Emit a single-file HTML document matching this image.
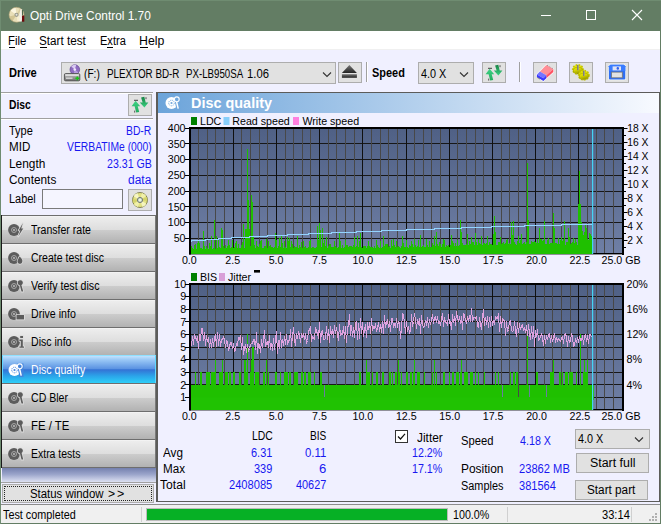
<!DOCTYPE html>
<html><head><meta charset="utf-8"><title>Opti Drive Control 1.70</title>
<style>

html,body{margin:0;padding:0;}
body{width:661px;height:524px;overflow:hidden;position:relative;background:#f0f0ff;font-family:"Liberation Sans", sans-serif;font-size:12px;}
div,span,svg{position:absolute;box-sizing:border-box;}
.t{white-space:pre;line-height:20px;height:20px;transform-origin:0 50%;z-index:5;}
.charts{left:0;top:0;z-index:3;}
.btn{background:#e1e1e1;border:1px solid #adadad;}
.nav{left:2px;width:154px;height:28px;border-top:1px solid #6e6e6e;border-right:1px solid #7a7a7a;background:linear-gradient(#f8f8f8 0,#ededed 4%,#dedede 50%,#cdcdcd 51%,#b2b2b2 100%);}
.nav.sel{background:linear-gradient(#c2e2fe 0,#9ac8f6 14%,#5b93e2 47%,#3473d5 51%,#2ba4e9 74%,#2ecff8 100%);border-left:1px solid #5fd8ff;border-right:1px solid #5fd8ff;border-top-color:#8fe0ff;}
.ic{z-index:6;}

</style></head><body>
<div style="left:0;top:0;width:661px;height:31px;background:#637d64"></div>
<div style="left:0;top:0;width:1px;height:524px;background:#637d64"></div>
<div style="left:660px;top:0;width:1px;height:524px;background:#637d64"></div>
<div style="left:0;top:523px;width:661px;height:1px;background:#637d64"></div>
<div style="left:0;top:0;width:661px;height:1px;background:#6f8c71"></div><div style="left:0;top:0;width:1px;height:524px;background:#6f8c71"></div>
<svg class="ic" style="left:8px;top:6px" width="20" height="20" viewBox="0 0 20 20">
<circle cx="8.5" cy="8.8" r="7.5" fill="#e9dfb8"/>
<path d="M8.5,8.8 L2.2,4.6 A7.5,7.5 0 0 1 7.5,1.4 Z" fill="#fbf6e0"/><path d="M8.5,8.8 L14.8,13 A7.5,7.5 0 0 1 9.5,16.2 Z" fill="#f6eed0"/>
<path d="M8.5,8.8 L1.2,10.5 A7.5,7.5 0 0 0 4.5,15.2 Z" fill="#d2c594"/><path d="M8.5,8.8 L12,2.2 A7.5,7.5 0 0 1 15.6,6.5 Z" fill="#d8cc9c"/>
<circle cx="8.5" cy="8.8" r="7.5" fill="none" stroke="#a89c70" stroke-width="0.6"/>
<circle cx="8.5" cy="8.8" r="2.1" fill="#9a9a8c"/><circle cx="8.5" cy="8.8" r="1" fill="#e4e4dc"/>
<path d="M12.6,3 L13.6,3 L13.8,15.6 L11.6,15.6 L11.4,8 Z" fill="#f2f2ee"/>
<rect x="14" y="9.5" width="2.3" height="6.2" fill="#6e0a0c"/><rect x="14" y="4" width="1" height="5.5" fill="#4f6a52"/></svg>
<div style="left:541px;top:15px;width:10px;height:1px;background:#fff"></div>
<div style="left:586px;top:10px;width:10px;height:10px;border:1px solid #fff"></div>
<svg class="ic" style="left:631px;top:9px" width="12" height="12" viewBox="0 0 12 12"><path d="M1,1 L11,11 M11,1 L1,11" stroke="#fff" stroke-width="1.1" fill="none"/></svg>
<div style="left:1px;top:31px;width:659px;height:18px;background:#fff"></div><div style="left:1px;top:49px;width:659px;height:1px;background:#f0f0f0"></div>
<div style="left:8.5px;top:47px;width:6px;height:1px;background:#000;z-index:6"></div>
<div style="left:40px;top:47px;width:6.5px;height:1px;background:#000;z-index:6"></div>
<div style="left:107px;top:47px;width:6px;height:1px;background:#000;z-index:6"></div>
<div style="left:140px;top:47px;width:8px;height:1px;background:#000;z-index:6"></div>
<div class="btn" style="left:61px;top:62px;width:275px;height:22px"></div>
<svg class="ic" style="left:322px;top:70.5px" width="10" height="8" viewBox="0 0 10 8"><path d="M1,1.5 L5,5.5 L9,1.5" stroke="#333" stroke-width="1.1" fill="none"/></svg>
<svg class="ic" style="left:63px;top:63px" width="19" height="20" viewBox="0 0 19 20">
<defs><linearGradient id="dv" x1="0" y1="0" x2="0" y2="1"><stop offset="0" stop-color="#c4c4c4"/><stop offset="1" stop-color="#707070"/></linearGradient></defs>
<circle cx="11.8" cy="6.6" r="4.8" fill="#8e6cc0" stroke="#5e4290" stroke-width="0.7"/>
<path d="M11.8,6.6 L8.2,3.6 A4.8,4.8 0 0 1 13.2,2 Z" fill="#d9caf2"/><path d="M11.8,6.6 L15.4,9.6 A4.8,4.8 0 0 1 10.6,11.2 Z" fill="#b79ce0"/>
<circle cx="11.8" cy="6.6" r="1.3" fill="#efe8fa"/>
<rect x="1.4" y="10.6" width="15.4" height="7.2" rx="1.2" fill="url(#dv)" stroke="#4a4a4a" stroke-width="0.9"/>
<rect x="2.4" y="11.4" width="13.4" height="1.4" fill="#e6e6e6"/><rect x="3" y="14.6" width="6.5" height="1.2" fill="#e0e0e0"/>
<path d="M13.6,13.4 h1.4 v1.2 h1.2 v1.4 h-1.2 v1.2 h-1.4 v-1.2 h-1.2 v-1.4 h1.2z" fill="#18c818"/></svg>
<div class="btn" style="left:338px;top:62px;width:24px;height:21px"></div>
<svg class="ic" style="left:341px;top:64px" width="17" height="15" viewBox="0 0 17 15"><defs><linearGradient id="ej" x1="0" y1="0" x2="0" y2="1"><stop offset="0" stop-color="#777"/><stop offset="1" stop-color="#222"/></linearGradient></defs><path d="M8.4,1 L15.9,9 L0.9,9 Z" fill="url(#ej)"/><rect x="0.9" y="10.2" width="15" height="3.6" fill="url(#ej)"/></svg>
<div style="left:366px;top:62px;width:1px;height:20px;background:#a0a0a0"></div><div style="left:367px;top:62px;width:1px;height:20px;background:#fff"></div>
<div class="btn" style="left:418px;top:62px;width:56px;height:22px"></div>
<svg class="ic" style="left:459px;top:70.5px" width="10" height="8" viewBox="0 0 10 8"><path d="M1,1.5 L5,5.5 L9,1.5" stroke="#333" stroke-width="1.1" fill="none"/></svg>
<div class="btn" style="left:482px;top:62px;width:24px;height:21px"></div>
<svg class="ic" style="left:482px;top:62px" width="24" height="22" viewBox="0 0 24 22">
<defs><linearGradient id="ra482" x1="0" y1="0" x2="0" y2="1"><stop offset="0" stop-color="#3ed486"/><stop offset="1" stop-color="#22aa5c"/></linearGradient>
<linearGradient id="rb482" x1="0" y1="0" x2="0" y2="1"><stop offset="0" stop-color="#158044"/><stop offset="1" stop-color="#3cd482"/></linearGradient></defs>
<path d="M7.6,6.8 L12.2,12.2 L9.7,12.2 L11.2,18 L8.2,18.6 L6.6,12.2 L3.6,12.2 Z" fill="url(#ra482)"/>
<path d="M16.4,13.6 L11.8,8.6 L14.6,8.6 L13.1,3.4 L16.3,2.8 L17.7,8.6 L20.4,8.6 Z" fill="url(#rb482)"/>
<rect x="6" y="5.8" width="4" height="1" fill="#444"/><rect x="17.5" y="3.2" width="1" height="2" fill="#555"/><rect x="6.2" y="16.6" width="1" height="2" fill="#555"/></svg>
<div style="left:519px;top:62px;width:1px;height:20px;background:#a0a0a0"></div><div style="left:520px;top:62px;width:1px;height:20px;background:#fff"></div>
<div class="btn" style="left:533px;top:62px;width:24px;height:21px"></div>
<svg class="ic" style="left:533px;top:62px" width="24" height="21" viewBox="0 0 24 21">
<path d="M13.3,3 L20.3,6.9 L20.3,9.9 L13.3,16.3 L10.4,19 L3.9,15 L3.9,12.4 Z" fill="#fff" stroke="#fff" stroke-width="1.4" stroke-linejoin="round" opacity=".85"/>
<path d="M13.3,3 L20.3,6.9 L13.3,13.3 L6.9,9.4 Z" fill="#ff8e96"/>
<path d="M20.3,6.9 L20.3,9.9 L13.3,16.3 L13.3,13.3 Z" fill="#ff5464"/>
<path d="M6.9,9.4 L13.3,13.3 L10.4,16.3 L3.9,12.4 Z" fill="#7474ff"/>
<path d="M3.9,12.4 L10.4,16.3 L13.3,13.3 L13.3,16.3 L10.4,19 L3.9,15 Z" fill="#3838ff"/>
<path d="M14,3.2 L20.4,6.8" stroke="#555" stroke-width="0.6" stroke-dasharray="1 1"/><path d="M3.8,15.2 L7,17.2" stroke="#555" stroke-width="0.6"/></svg>
<div class="btn" style="left:569px;top:62px;width:24px;height:21px"></div>
<svg class="ic" style="left:571px;top:63px" width="20" height="20" viewBox="0 0 20 20">
<defs><linearGradient id="gg" x1="0" y1="0" x2="0.3" y2="1"><stop offset="0" stop-color="#f2f200"/><stop offset="0.6" stop-color="#d8d800"/><stop offset="1" stop-color="#9a9a00"/></linearGradient></defs>
<g><ellipse cx="6.9" cy="6.4" rx="5.2" ry="4.6" fill="url(#gg)" stroke="#c4c400" stroke-width="1.6" stroke-dasharray="1.6 1.3"/><ellipse cx="6.9" cy="7.6" rx="4.6" ry="3.4" fill="none" stroke="#8a8a00" stroke-width="0.7" opacity=".6"/>
<rect x="6.1" y="2" width="1.7" height="5.2" fill="#9a9a9a"/><rect x="6.1" y="2" width="0.6" height="5.2" fill="#6e6e6e"/></g>
<g><ellipse cx="12.8" cy="12.2" rx="5.2" ry="4.6" fill="url(#gg)" stroke="#c4c400" stroke-width="1.6" stroke-dasharray="1.6 1.3"/><ellipse cx="12.8" cy="13.4" rx="4.6" ry="3.4" fill="none" stroke="#8a8a00" stroke-width="0.7" opacity=".6"/>
<rect x="12" y="7.8" width="1.7" height="5.2" fill="#9a9a9a"/><rect x="12" y="7.8" width="0.6" height="5.2" fill="#6e6e6e"/></g></svg>
<div class="btn" style="left:605px;top:62px;width:24px;height:21px"></div>
<svg class="ic" style="left:605px;top:62px" width="24" height="21" viewBox="0 0 24 21">
<path d="M5.4,2.7 H18.8 L20.3,4.2 V16.6 Q20.3,17.6 19.3,17.6 H4.9 Q3.9,17.6 3.9,16.6 V4.2 Z" fill="#2f6ff4" stroke="#fdfdf6" stroke-width="1.2" paint-order="stroke"/>
<path d="M5.4,2.7 H18.8 L20.3,4.2 V9 H3.9 V4.2 Z" fill="#3a7cff"/>
<rect x="7.6" y="4.4" width="8.4" height="4" fill="#dfe3f4"/><rect x="11.6" y="5" width="2.4" height="2.8" rx="1.2" fill="#2f5ff0"/>
<rect x="6.6" y="10.1" width="10.7" height="5.7" fill="#e2e2e2" stroke="#777" stroke-width="0.8"/></svg>
<div style="left:1px;top:92px;width:152px;height:1px;background:#a0a0a0"></div><div style="left:1px;top:93px;width:152px;height:1px;background:#fff"></div>
<div style="left:1px;top:118px;width:152px;height:1px;background:#a0a0a0"></div><div style="left:1px;top:119px;width:152px;height:1px;background:#fff"></div>
<div class="btn" style="left:128px;top:94px;width:24px;height:22px"></div>
<svg class="ic" style="left:128px;top:94px" width="24" height="22" viewBox="0 0 24 22">
<defs><linearGradient id="ra128" x1="0" y1="0" x2="0" y2="1"><stop offset="0" stop-color="#3ed486"/><stop offset="1" stop-color="#22aa5c"/></linearGradient>
<linearGradient id="rb128" x1="0" y1="0" x2="0" y2="1"><stop offset="0" stop-color="#158044"/><stop offset="1" stop-color="#3cd482"/></linearGradient></defs>
<path d="M7.6,6.8 L12.2,12.2 L9.7,12.2 L11.2,18 L8.2,18.6 L6.6,12.2 L3.6,12.2 Z" fill="url(#ra128)"/>
<path d="M16.4,13.6 L11.8,8.6 L14.6,8.6 L13.1,3.4 L16.3,2.8 L17.7,8.6 L20.4,8.6 Z" fill="url(#rb128)"/>
<rect x="6" y="5.8" width="4" height="1" fill="#444"/><rect x="17.5" y="3.2" width="1" height="2" fill="#555"/><rect x="6.2" y="16.6" width="1" height="2" fill="#555"/></svg>
<div style="left:42px;top:189px;width:81px;height:20px;background:#f5f5ff;border:1px solid #7a7a7a"></div>
<div class="btn" style="left:128px;top:189px;width:24px;height:22px"></div>
<svg class="ic" style="left:131px;top:191px" width="18" height="18" viewBox="0 0 18 18"><circle cx="9" cy="9" r="7.5" fill="#e2e282" stroke="#5a5a28" stroke-width="0.7"/>
<path d="M9,9 L2.6,5.2 A7.4,7.4 0 0 1 6.4,2 Z" fill="#f6f6c4"/><path d="M9,9 L15.4,12.8 A7.4,7.4 0 0 1 11.6,16 Z" fill="#f4f4be"/>
<path d="M9,9 L11,1.9 A7.4,7.4 0 0 1 15.2,5 Z" fill="#f0f0aa"/><path d="M9,9 L7,16.1 A7.4,7.4 0 0 1 2.8,13 Z" fill="#f0f0aa"/>
<path d="M9,9 L1.7,8 A7.4,7.4 0 0 0 2.4,12 Z" fill="#d2d26a"/><path d="M9,9 L16.3,10 A7.4,7.4 0 0 0 15.6,6 Z" fill="#d2d26a"/>
<circle cx="9" cy="9" r="2.6" fill="#cfe0c0" stroke="#6a6e74" stroke-width="0.9"/><circle cx="9" cy="9" r="1.1" fill="#f4f4f4"/></svg>
<div class="nav" style="top:215px"></div>
<svg class="ic" style="left:7px;top:222px" width="18" height="16" viewBox="0 0 18 16"><circle cx="7" cy="8" r="5.9" fill="#5c5c5c"/><circle cx="7" cy="8" r="2.5" fill="none" stroke="#b8b8b8" stroke-width="0.8"/><circle cx="7" cy="8" r="0.9" fill="#c8c8c8"/><path d="M15.8,1.2 L11.6,8.4 L13.4,8.4 L11.2,14.6 L16.2,6.6 L14.2,6.6 Z" fill="#5c5c5c" stroke="#dcdcdc" stroke-width="1.6" paint-order="stroke" stroke-linejoin="round"/></svg>
<div class="nav" style="top:243px"></div>
<svg class="ic" style="left:7px;top:250px" width="18" height="16" viewBox="0 0 18 16"><circle cx="7" cy="8" r="5.9" fill="#5c5c5c"/><circle cx="7" cy="8" r="2.5" fill="none" stroke="#b8b8b8" stroke-width="0.8"/><circle cx="7" cy="8" r="0.9" fill="#c8c8c8"/><path d="M12.5,6.5 c2.5,2 3.5,4 2.6,6 c-0.8,1.8 -3.6,1.8 -4.4,0 c-0.7,-1.6 0.4,-3 1.8,-6z" fill="#5c5c5c" stroke="#dcdcdc" stroke-width="1.6" paint-order="stroke" stroke-linejoin="round"/></svg>
<div class="nav" style="top:271px"></div>
<svg class="ic" style="left:7px;top:278px" width="18" height="16" viewBox="0 0 18 16"><circle cx="7" cy="8" r="5.9" fill="#5c5c5c"/><circle cx="7" cy="8" r="2.5" fill="none" stroke="#b8b8b8" stroke-width="0.8"/><circle cx="7" cy="8" r="0.9" fill="#c8c8c8"/><path d="M13.2,2.2 a2.6,2.6 0 1 0 0.1,0z M14.4,7 l1.8,6.6 h-1.7 l-1.6,-6.2z" fill="#5c5c5c" stroke="#dcdcdc" stroke-width="1.6" paint-order="stroke" stroke-linejoin="round"/></svg>
<div class="nav" style="top:299px"></div>
<svg class="ic" style="left:7px;top:306px" width="18" height="16" viewBox="0 0 18 16"><circle cx="7" cy="8" r="5.9" fill="#5c5c5c"/><circle cx="7" cy="8" r="2.5" fill="none" stroke="#b8b8b8" stroke-width="0.8"/><circle cx="7" cy="8" r="0.9" fill="#c8c8c8"/><path d="M9.5,9 h7.5 v4.4 h-7.5z" fill="#5c5c5c" stroke="#dcdcdc" stroke-width="1.6" paint-order="stroke" stroke-linejoin="round"/></svg>
<div class="nav" style="top:327px"></div>
<svg class="ic" style="left:7px;top:334px" width="18" height="16" viewBox="0 0 18 16"><circle cx="7" cy="8" r="5.9" fill="#5c5c5c"/><circle cx="7" cy="8" r="2.5" fill="none" stroke="#b8b8b8" stroke-width="0.8"/><circle cx="7" cy="8" r="0.9" fill="#c8c8c8"/><path d="M13.2,2 h2.8 v2 h-2.8z M12.4,5.6 h3.4 v6.8 h1.2 v1.4 h-4.6 v-1.4 h1.4 v-5.4 h-1.4z" fill="#5c5c5c" stroke="#dcdcdc" stroke-width="1.6" paint-order="stroke" stroke-linejoin="round"/></svg>
<div class="nav sel" style="top:355px"></div>
<svg class="ic" style="left:6.5px;top:362px" width="18" height="16" viewBox="0 0 18 16"><circle cx="7.5" cy="8" r="6" fill="#fff"/><circle cx="7.5" cy="8" r="2.8" fill="none" stroke="#4384dc" stroke-width="0.9" stroke-dasharray="1.2 0.7"/><circle cx="7.5" cy="8" r="1.1" fill="#4384dc"/>
<path d="M10.2,1.5 L16.5,1.5 L16.5,15 L12.6,15 L11.2,8.5 Z" fill="#4384dc"/>
<circle cx="12.8" cy="4.3" r="2.4" fill="#4384dc" stroke="#fff" stroke-width="1.1"/><path d="M12.6,6.8 L14.2,13.6" stroke="#fff" stroke-width="1.5" fill="none"/></svg>
<div class="nav" style="top:383px"></div>
<svg class="ic" style="left:7px;top:390px" width="18" height="16" viewBox="0 0 18 16"><circle cx="7" cy="8" r="5.9" fill="#5c5c5c"/><circle cx="7" cy="8" r="2.5" fill="none" stroke="#b8b8b8" stroke-width="0.8"/><circle cx="7" cy="8" r="0.9" fill="#c8c8c8"/><path d="M13.2,2.2 a2.6,2.6 0 1 0 0.1,0z M14.6,7 l1.6,6.6 h-1.7 l-1.5,-6.2z" fill="#5c5c5c" stroke="#dcdcdc" stroke-width="1.6" paint-order="stroke" stroke-linejoin="round"/></svg>
<div class="nav" style="top:411px"></div>
<svg class="ic" style="left:7px;top:418px" width="18" height="16" viewBox="0 0 18 16"><circle cx="7" cy="8" r="5.9" fill="#5c5c5c"/><circle cx="7" cy="8" r="2.5" fill="none" stroke="#b8b8b8" stroke-width="0.8"/><circle cx="7" cy="8" r="0.9" fill="#c8c8c8"/><path d="M13.2,2.2 a2.6,2.6 0 1 0 0.1,0z M14.6,7 l1.6,6.6 h-1.7 l-1.5,-6.2z" fill="#5c5c5c" stroke="#dcdcdc" stroke-width="1.6" paint-order="stroke" stroke-linejoin="round"/></svg>
<div class="nav" style="top:439px"></div>
<svg class="ic" style="left:7px;top:446px" width="18" height="16" viewBox="0 0 18 16"><circle cx="7" cy="8" r="5.9" fill="#5c5c5c"/><circle cx="7" cy="8" r="2.5" fill="none" stroke="#b8b8b8" stroke-width="0.8"/><circle cx="7" cy="8" r="0.9" fill="#c8c8c8"/><path d="M13.2,2.2 a2.6,2.6 0 1 0 0.1,0z M14.6,7 l1.6,6.6 h-1.7 l-1.5,-6.2z" fill="#5c5c5c" stroke="#dcdcdc" stroke-width="1.6" paint-order="stroke" stroke-linejoin="round"/></svg>
<div style="left:1px;top:215px;width:1px;height:253px;background:#1a1a1a"></div>
<div style="left:2px;top:467px;width:154px;height:1px;background:#6e6e6e"></div>
<div style="left:2px;top:468px;width:154px;height:14px;background:linear-gradient(#7480ae,#9aa4ca 45%,#dde1f2 100%)"></div>
<div style="left:1px;top:482px;width:155px;height:1px;background:#a0a0a0"></div>
<div class="btn" style="left:2px;top:484px;width:152px;height:19px"></div>
<div style="left:4px;top:486px;width:148px;height:15px;border:1px dotted #222"></div>
<div style="left:1px;top:505px;width:659px;height:18px;background:#f0f0f0"></div>
<div style="left:1px;top:504px;width:659px;height:1px;background:#8c8c8c"></div>
<div style="left:141px;top:507px;width:1px;height:15px;background:#d0d0d0"></div>
<div style="left:507px;top:507px;width:1px;height:15px;background:#d0d0d0"></div>
<div style="left:631px;top:507px;width:1px;height:15px;background:#d0d0d0"></div>
<div style="left:146px;top:508px;width:302px;height:13px;background:#e6e6e6;border:1px solid #bcbcbc"></div>
<div style="left:147px;top:509px;width:300px;height:11px;background:#06b025"></div>
<div style="left:655px;top:513px;width:2px;height:2px;background:#b0b0b0"></div>
<div style="left:652px;top:516px;width:2px;height:2px;background:#b0b0b0"></div>
<div style="left:655px;top:516px;width:2px;height:2px;background:#b0b0b0"></div>
<div style="left:649px;top:519px;width:2px;height:2px;background:#b0b0b0"></div>
<div style="left:652px;top:519px;width:2px;height:2px;background:#b0b0b0"></div>
<div style="left:655px;top:519px;width:2px;height:2px;background:#b0b0b0"></div>
<div style="left:156px;top:92px;width:504px;height:410px;border:1px solid #5c5c5a;border-left-width:2px;background:#f0f0ff"></div>
<div style="left:158px;top:93px;width:501px;height:20px;background:linear-gradient(90deg,#6ca4da 0,#f8faff 100%)"></div>
<svg class="ic" style="left:164px;top:95px" width="18" height="16" viewBox="0 0 18 16"><circle cx="7.5" cy="8" r="6" fill="#fff"/><circle cx="7.5" cy="8" r="2.8" fill="none" stroke="#70a7dc" stroke-width="0.9" stroke-dasharray="1.2 0.7"/><circle cx="7.5" cy="8" r="1.1" fill="#70a7dc"/>
<path d="M10.2,1.5 L16.5,1.5 L16.5,15 L12.6,15 L11.2,8.5 Z" fill="#70a7dc"/>
<circle cx="12.8" cy="4.3" r="2.4" fill="#70a7dc" stroke="#fff" stroke-width="1.1"/><path d="M12.6,6.8 L14.2,13.6" stroke="#fff" stroke-width="1.5" fill="none"/></svg>
<div style="left:395px;top:430px;width:13px;height:13px;background:#fff;border:1px solid #333"></div>
<svg class="ic" style="left:396px;top:431px" width="11" height="11" viewBox="0 0 11 11"><path d="M2,5.5 L4.5,8 L9,2.8" stroke="#111" stroke-width="1.2" fill="none"/></svg>
<div class="btn" style="left:575px;top:429px;width:75px;height:20px"></div>
<svg class="ic" style="left:634px;top:435.5px" width="10" height="8" viewBox="0 0 10 8"><path d="M1,1.5 L5,5.5 L9,1.5" stroke="#333" stroke-width="1.1" fill="none"/></svg>
<div class="btn" style="left:576px;top:453px;width:73px;height:20px"></div>
<div class="btn" style="left:575px;top:480px;width:73px;height:20px"></div>
<span class=t style="left:29.65px;top:5.5px;font-size:12px;font-weight:normal;color:#fff;transform:scaleX(0.990);">Opti Drive Control 1.70</span>
<span class=t style="left:7.85px;top:31.0px;font-size:12px;font-weight:normal;color:#000;transform:scaleX(0.946);">File</span>
<span class=t style="left:39.35px;top:31.0px;font-size:12px;font-weight:normal;color:#000;transform:scaleX(0.974);">Start test</span>
<span class=t style="left:99.85px;top:31.0px;font-size:12px;font-weight:normal;color:#000;transform:scaleX(0.921);">Extra</span>
<span class=t style="left:139.35px;top:31.0px;font-size:12px;font-weight:normal;color:#000;transform:scaleX(1.025);">Help</span>
<span class=t style="left:8.85px;top:63.0px;font-size:12px;font-weight:bold;color:#000;transform:scaleX(0.926);">Drive</span>
<span class=t style="left:83.85px;top:63.5px;font-size:12px;font-weight:normal;color:#000;transform:scaleX(0.847);">(F:)</span>
<span class=t style="left:107.35px;top:63.5px;font-size:12px;font-weight:normal;color:#000;transform:scaleX(0.819);">PLEXTOR BD-R</span>
<span class=t style="left:185.75px;top:63.5px;font-size:12px;font-weight:normal;color:#000;transform:scaleX(0.809);">PX-LB950SA</span>
<span class=t style="left:246.55px;top:63.5px;font-size:12px;font-weight:normal;color:#000;transform:scaleX(0.938);">1.06</span>
<span class=t style="left:372.35px;top:63.0px;font-size:12px;font-weight:bold;color:#000;transform:scaleX(0.911);">Speed</span>
<span class=t style="left:421.35px;top:63.5px;font-size:12px;font-weight:normal;color:#000;transform:scaleX(0.903);">4.0 X</span>
<span class=t style="left:8.85px;top:94.5px;font-size:12px;font-weight:bold;color:#000;transform:scaleX(0.860);">Disc</span>
<span class=t style="left:8.85px;top:121.0px;font-size:12px;font-weight:normal;color:#000;transform:scaleX(0.915);">Type</span>
<span class=t style="left:8.85px;top:137.0px;font-size:12px;font-weight:normal;color:#000;transform:scaleX(0.968);">MID</span>
<span class=t style="left:8.85px;top:154.0px;font-size:12px;font-weight:normal;color:#000;transform:scaleX(0.989);">Length</span>
<span class=t style="left:8.85px;top:170.0px;font-size:12px;font-weight:normal;color:#000;transform:scaleX(0.985);">Contents</span>
<span class=t style="left:8.85px;top:189.0px;font-size:12px;font-weight:normal;color:#000;transform:scaleX(0.912);">Label</span>
<span class=t style="left:126.35px;top:121.0px;font-size:12px;font-weight:normal;color:#1818f0;transform:scaleX(0.862);">BD-R</span>
<span class=t style="left:67.35px;top:137.0px;font-size:12px;font-weight:normal;color:#1818f0;transform:scaleX(0.861);">VERBATIMe (000)</span>
<span class=t style="left:106.85px;top:154.0px;font-size:12px;font-weight:normal;color:#1818f0;transform:scaleX(0.884);">23.31 GB</span>
<span class=t style="left:128.35px;top:170.0px;font-size:12px;font-weight:normal;color:#1818f0;transform:scaleX(0.997);">data</span>
<span class=t style="left:30.65px;top:219.5px;font-size:12px;font-weight:normal;color:#000;transform:scaleX(0.879);">Transfer rate</span>
<span class=t style="left:30.65px;top:247.5px;font-size:12px;font-weight:normal;color:#000;transform:scaleX(0.876);">Create test disc</span>
<span class=t style="left:30.65px;top:275.5px;font-size:12px;font-weight:normal;color:#000;transform:scaleX(0.885);">Verify test disc</span>
<span class=t style="left:30.65px;top:303.5px;font-size:12px;font-weight:normal;color:#000;transform:scaleX(0.884);">Drive info</span>
<span class=t style="left:30.65px;top:331.5px;font-size:12px;font-weight:normal;color:#000;transform:scaleX(0.880);">Disc info</span>
<span class=t style="left:30.65px;top:359.5px;font-size:12px;font-weight:normal;color:#fff;transform:scaleX(0.883);">Disc quality</span>
<span class=t style="left:30.65px;top:387.5px;font-size:12px;font-weight:normal;color:#000;transform:scaleX(0.881);">CD Bler</span>
<span class=t style="left:30.65px;top:415.5px;font-size:12px;font-weight:normal;color:#000;transform:scaleX(0.949);">FE / TE</span>
<span class=t style="left:30.65px;top:443.5px;font-size:12px;font-weight:normal;color:#000;transform:scaleX(0.873);">Extra tests</span>
<span class=t style="left:29.65px;top:483.5px;font-size:12px;font-weight:normal;color:#000;transform:scaleX(0.950);">Status window</span>
<span class=t style="left:107.85px;top:483.5px;font-size:12px;font-weight:normal;color:#000;transform:scaleX(1.012);">&gt;</span>
<span class=t style="left:117.35px;top:483.5px;font-size:12px;font-weight:normal;color:#000;transform:scaleX(1.041);">&gt;</span>
<span class=t style="left:2.85px;top:505.0px;font-size:12px;font-weight:normal;color:#000;transform:scaleX(0.902);">Test completed</span>
<span class=t style="left:453.35px;top:505.0px;font-size:12px;font-weight:normal;color:#000;transform:scaleX(0.892);">100.0%</span>
<span class=t style="left:601.85px;top:505.0px;font-size:12px;font-weight:normal;color:#000;transform:scaleX(0.926);">33:14</span>
<span class=t style="left:190.95px;top:93.0px;font-size:15px;font-weight:bold;color:#fff;transform:scaleX(0.962);">Disc quality</span>
<span class=t style="left:251.85px;top:426.0px;font-size:12px;font-weight:normal;color:#000;transform:scaleX(0.866);">LDC</span>
<span class=t style="left:310.35px;top:426.0px;font-size:12px;font-weight:normal;color:#000;transform:scaleX(0.843);">BIS</span>
<span class=t style="left:162.65px;top:443.3px;font-size:12px;font-weight:normal;color:#000;transform:scaleX(0.977);">Avg</span>
<span class=t style="left:162.65px;top:459.0px;font-size:12px;font-weight:normal;color:#000;transform:scaleX(0.970);">Max</span>
<span class=t style="left:160.05px;top:475.0px;font-size:12px;font-weight:normal;color:#000;transform:scaleX(1.009);">Total</span>
<span class=t style="left:251.35px;top:443.3px;font-size:12px;font-weight:normal;color:#1818f0;transform:scaleX(0.912);">6.31</span>
<span class=t style="left:305.35px;top:443.3px;font-size:12px;font-weight:normal;color:#1818f0;transform:scaleX(0.948);">0.11</span>
<span class=t style="left:254.35px;top:459.0px;font-size:12px;font-weight:normal;color:#1818f0;transform:scaleX(0.914);">339</span>
<span class=t style="left:319.35px;top:459.0px;font-size:12px;font-weight:normal;color:#1818f0;transform:scaleX(1.092);">6</span>
<span class=t style="left:229.35px;top:475.0px;font-size:12px;font-weight:normal;color:#1818f0;transform:scaleX(0.927);">2408085</span>
<span class=t style="left:296.35px;top:475.0px;font-size:12px;font-weight:normal;color:#1818f0;transform:scaleX(0.908);">40627</span>
<span class=t style="left:416.85px;top:427.5px;font-size:12px;font-weight:normal;color:#000;transform:scaleX(0.992);">Jitter</span>
<span class=t style="left:412.35px;top:442.5px;font-size:12px;font-weight:normal;color:#1818f0;transform:scaleX(0.890);">12.2%</span>
<span class=t style="left:412.35px;top:459.0px;font-size:12px;font-weight:normal;color:#1818f0;transform:scaleX(0.890);">17.1%</span>
<span class=t style="left:460.75px;top:431.0px;font-size:12px;font-weight:normal;color:#000;transform:scaleX(0.934);">Speed</span>
<span class=t style="left:460.75px;top:459.0px;font-size:12px;font-weight:normal;color:#000;transform:scaleX(0.993);">Position</span>
<span class=t style="left:460.75px;top:475.5px;font-size:12px;font-weight:normal;color:#000;transform:scaleX(0.908);">Samples</span>
<span class=t style="left:520.15px;top:431.0px;font-size:12px;font-weight:normal;color:#1818f0;transform:scaleX(0.893);">4.18 X</span>
<span class=t style="left:519.35px;top:459.0px;font-size:12px;font-weight:normal;color:#1818f0;transform:scaleX(0.929);">23862 MB</span>
<span class=t style="left:519.35px;top:475.5px;font-size:12px;font-weight:normal;color:#1818f0;transform:scaleX(0.919);">381564</span>
<span class=t style="left:577.85px;top:429.0px;font-size:12px;font-weight:normal;color:#000;transform:scaleX(0.903);">4.0 X</span>
<span class=t style="left:589.75px;top:452.5px;font-size:12px;font-weight:normal;color:#000;transform:scaleX(1.031);">Start full</span>
<span class=t style="left:586.85px;top:479.5px;font-size:12px;font-weight:normal;color:#000;transform:scaleX(0.979);">Start part</span>
<svg class="charts" width="661" height="524" viewBox="0 0 661 524" font-family="Liberation Sans, sans-serif" font-size="10.67px">
<defs><linearGradient id="bg1" x1="0" y1="0" x2="0" y2="1"><stop offset="0" stop-color="#4f6085"/><stop offset="1" stop-color="#6f7fa5"/></linearGradient><linearGradient id="bg2" x1="0" y1="0" x2="0" y2="1"><stop offset="0" stop-color="#4f6085"/><stop offset="1" stop-color="#6f7fa5"/></linearGradient></defs>
<rect x="189" y="127" width="435" height="127" fill="url(#bg1)"/>
<line x1="190" y1="238.5" x2="623" y2="238.5" stroke="#181818" stroke-width="1"/>
<line x1="190" y1="222.5" x2="623" y2="222.5" stroke="#181818" stroke-width="1"/>
<line x1="190" y1="206.5" x2="623" y2="206.5" stroke="#181818" stroke-width="1"/>
<line x1="190" y1="191.5" x2="623" y2="191.5" stroke="#181818" stroke-width="1"/>
<line x1="190" y1="175.5" x2="623" y2="175.5" stroke="#181818" stroke-width="1"/>
<line x1="190" y1="159.5" x2="623" y2="159.5" stroke="#181818" stroke-width="1"/>
<line x1="190" y1="143.5" x2="623" y2="143.5" stroke="#181818" stroke-width="1"/>
<line x1="198.5" y1="128" x2="198.5" y2="254" stroke="#484848" stroke-width="1"/>
<line x1="207.5" y1="128" x2="207.5" y2="254" stroke="#484848" stroke-width="1"/>
<line x1="215.5" y1="128" x2="215.5" y2="254" stroke="#484848" stroke-width="1"/>
<line x1="224.5" y1="128" x2="224.5" y2="254" stroke="#484848" stroke-width="1"/>
<line x1="233.5" y1="128" x2="233.5" y2="254" stroke="#101010" stroke-width="1"/>
<line x1="241.5" y1="128" x2="241.5" y2="254" stroke="#484848" stroke-width="1"/>
<line x1="250.5" y1="128" x2="250.5" y2="254" stroke="#484848" stroke-width="1"/>
<line x1="259.5" y1="128" x2="259.5" y2="254" stroke="#484848" stroke-width="1"/>
<line x1="267.5" y1="128" x2="267.5" y2="254" stroke="#484848" stroke-width="1"/>
<line x1="276.5" y1="128" x2="276.5" y2="254" stroke="#101010" stroke-width="1"/>
<line x1="285.5" y1="128" x2="285.5" y2="254" stroke="#484848" stroke-width="1"/>
<line x1="293.5" y1="128" x2="293.5" y2="254" stroke="#484848" stroke-width="1"/>
<line x1="302.5" y1="128" x2="302.5" y2="254" stroke="#484848" stroke-width="1"/>
<line x1="310.5" y1="128" x2="310.5" y2="254" stroke="#484848" stroke-width="1"/>
<line x1="319.5" y1="128" x2="319.5" y2="254" stroke="#101010" stroke-width="1"/>
<line x1="328.5" y1="128" x2="328.5" y2="254" stroke="#484848" stroke-width="1"/>
<line x1="336.5" y1="128" x2="336.5" y2="254" stroke="#484848" stroke-width="1"/>
<line x1="345.5" y1="128" x2="345.5" y2="254" stroke="#484848" stroke-width="1"/>
<line x1="354.5" y1="128" x2="354.5" y2="254" stroke="#484848" stroke-width="1"/>
<line x1="362.5" y1="128" x2="362.5" y2="254" stroke="#101010" stroke-width="1"/>
<line x1="371.5" y1="128" x2="371.5" y2="254" stroke="#484848" stroke-width="1"/>
<line x1="380.5" y1="128" x2="380.5" y2="254" stroke="#484848" stroke-width="1"/>
<line x1="388.5" y1="128" x2="388.5" y2="254" stroke="#484848" stroke-width="1"/>
<line x1="397.5" y1="128" x2="397.5" y2="254" stroke="#484848" stroke-width="1"/>
<line x1="406.5" y1="128" x2="406.5" y2="254" stroke="#101010" stroke-width="1"/>
<line x1="414.5" y1="128" x2="414.5" y2="254" stroke="#484848" stroke-width="1"/>
<line x1="423.5" y1="128" x2="423.5" y2="254" stroke="#484848" stroke-width="1"/>
<line x1="431.5" y1="128" x2="431.5" y2="254" stroke="#484848" stroke-width="1"/>
<line x1="440.5" y1="128" x2="440.5" y2="254" stroke="#484848" stroke-width="1"/>
<line x1="449.5" y1="128" x2="449.5" y2="254" stroke="#101010" stroke-width="1"/>
<line x1="457.5" y1="128" x2="457.5" y2="254" stroke="#484848" stroke-width="1"/>
<line x1="466.5" y1="128" x2="466.5" y2="254" stroke="#484848" stroke-width="1"/>
<line x1="475.5" y1="128" x2="475.5" y2="254" stroke="#484848" stroke-width="1"/>
<line x1="483.5" y1="128" x2="483.5" y2="254" stroke="#484848" stroke-width="1"/>
<line x1="492.5" y1="128" x2="492.5" y2="254" stroke="#101010" stroke-width="1"/>
<line x1="501.5" y1="128" x2="501.5" y2="254" stroke="#484848" stroke-width="1"/>
<line x1="509.5" y1="128" x2="509.5" y2="254" stroke="#484848" stroke-width="1"/>
<line x1="518.5" y1="128" x2="518.5" y2="254" stroke="#484848" stroke-width="1"/>
<line x1="526.5" y1="128" x2="526.5" y2="254" stroke="#484848" stroke-width="1"/>
<line x1="535.5" y1="128" x2="535.5" y2="254" stroke="#101010" stroke-width="1"/>
<line x1="544.5" y1="128" x2="544.5" y2="254" stroke="#484848" stroke-width="1"/>
<line x1="552.5" y1="128" x2="552.5" y2="254" stroke="#484848" stroke-width="1"/>
<line x1="561.5" y1="128" x2="561.5" y2="254" stroke="#484848" stroke-width="1"/>
<line x1="570.5" y1="128" x2="570.5" y2="254" stroke="#484848" stroke-width="1"/>
<line x1="578.5" y1="128" x2="578.5" y2="254" stroke="#101010" stroke-width="1"/>
<line x1="587.5" y1="128" x2="587.5" y2="254" stroke="#484848" stroke-width="1"/>
<line x1="596.5" y1="128" x2="596.5" y2="254" stroke="#484848" stroke-width="1"/>
<line x1="604.5" y1="128" x2="604.5" y2="254" stroke="#484848" stroke-width="1"/>
<line x1="613.5" y1="128" x2="613.5" y2="254" stroke="#484848" stroke-width="1"/>
<rect x="189" y="253" width="435" height="1.4" fill="#000"/>
<path d="M191,254.0L191,246L192,246L192,248L193,248L193,249L194,249L194,245L195,245L195,244L196,244L196,249L197,249L197,243L198,243L198,240L199,240L199,243L200,243L200,248L201,248L201,248L202,248L202,249L203,249L203,231L204,231L204,246L205,246L205,249L206,249L206,246L207,246L207,248L208,248L208,249L209,249L209,243L210,243L210,246L211,246L211,236L212,236L212,249L213,249L213,248L214,248L214,220L215,220L215,249L216,249L216,236L217,236L217,248L218,248L218,238L219,238L219,247L220,247L220,248L221,248L221,228L222,228L222,230L223,230L223,246L224,246L224,248L225,248L225,245L226,245L226,248L227,248L227,246L228,246L228,240L229,240L229,245L230,245L230,248L231,248L231,247L232,247L232,240L233,240L233,248L234,248L234,247L235,247L235,243L236,243L236,241L237,241L237,248L238,248L238,244L239,244L239,248L240,248L240,248L241,248L241,245L242,245L242,242L243,242L243,224L244,224L244,248L245,248L245,229L246,229L246,229L247,229L247,149L248,149L248,200L249,200L249,229L250,229L250,246L251,246L251,195L252,195L252,202L253,202L253,236L254,236L254,245L255,245L255,248L256,248L256,241L257,241L257,246L258,246L258,247L259,247L259,244L260,244L260,241L261,241L261,240L262,240L262,248L263,248L263,248L264,248L264,246L265,246L265,246L266,246L266,239L267,239L267,248L268,248L268,241L269,241L269,246L270,246L270,245L271,245L271,247L272,247L272,247L273,247L273,248L274,248L274,247L275,247L275,233L276,233L276,240L277,240L277,248L278,248L278,246L279,246L279,238L280,238L280,247L281,247L281,236L282,236L282,243L283,243L283,248L284,248L284,241L285,241L285,247L286,247L286,248L287,248L287,237L288,237L288,241L289,241L289,238L290,238L290,247L291,247L291,241L292,241L292,244L293,244L293,248L294,248L294,246L295,246L295,247L296,247L296,247L297,247L297,236L298,236L298,248L299,248L299,245L300,245L300,247L301,247L301,242L302,242L302,248L303,248L303,241L304,241L304,247L305,247L305,246L306,246L306,248L307,248L307,248L308,248L308,247L309,247L309,241L310,241L310,240L311,240L311,248L312,248L312,247L313,247L313,247L314,247L314,248L315,248L315,248L316,248L316,247L317,247L317,226L318,226L318,240L319,240L319,223L320,223L320,230L321,230L321,247L322,247L322,228L323,228L323,243L324,243L324,240L325,240L325,246L326,246L326,237L327,237L327,248L328,248L328,246L329,246L329,244L330,244L330,244L331,244L331,247L332,247L332,247L333,247L333,247L334,247L334,241L335,241L335,246L336,246L336,247L337,247L337,248L338,248L338,247L339,247L339,233L340,233L340,241L341,241L341,248L342,248L342,245L343,245L343,248L344,248L344,247L345,247L345,240L346,240L346,245L347,245L347,245L348,245L348,247L349,247L349,246L350,246L350,246L351,246L351,246L352,246L352,247L353,247L353,245L354,245L354,237L355,237L355,247L356,247L356,246L357,246L357,236L358,236L358,247L359,247L359,241L360,241L360,233L361,233L361,247L362,247L362,248L363,248L363,246L364,246L364,246L365,246L365,246L366,246L366,248L367,248L367,246L368,246L368,241L369,241L369,246L370,246L370,247L371,247L371,247L372,247L372,247L373,247L373,248L374,248L374,246L375,246L375,248L376,248L376,240L377,240L377,245L378,245L378,247L379,247L379,248L380,248L380,241L381,241L381,248L382,248L382,247L383,247L383,236L384,236L384,246L385,246L385,244L386,244L386,244L387,244L387,244L388,244L388,247L389,247L389,246L390,246L390,248L391,248L391,240L392,240L392,246L393,246L393,239L394,239L394,245L395,245L395,247L396,247L396,241L397,241L397,247L398,247L398,246L399,246L399,247L400,247L400,248L401,248L401,246L402,246L402,236L403,236L403,243L404,243L404,247L405,247L405,247L406,247L406,240L407,240L407,247L408,247L408,248L409,248L409,245L410,245L410,246L411,246L411,241L412,241L412,244L413,244L413,247L414,247L414,239L415,239L415,245L416,245L416,247L417,247L417,246L418,246L418,240L419,240L419,247L420,247L420,235L421,235L421,247L422,247L422,246L423,246L423,245L424,245L424,247L425,247L425,247L426,247L426,239L427,239L427,245L428,245L428,247L429,247L429,241L430,241L430,247L431,247L431,247L432,247L432,243L433,243L433,245L434,245L434,236L435,236L435,246L436,246L436,232L437,232L437,244L438,244L438,246L439,246L439,242L440,242L440,244L441,244L441,247L442,247L442,244L443,244L443,239L444,239L444,240L445,240L445,247L446,247L446,245L447,245L447,246L448,246L448,245L449,245L449,247L450,247L450,245L451,245L451,235L452,235L452,241L453,241L453,243L454,243L454,246L455,246L455,243L456,243L456,246L457,246L457,240L458,240L458,246L459,246L459,245L460,245L460,220L461,220L461,232L462,232L462,243L463,243L463,245L464,245L464,245L465,245L465,245L466,245L466,244L467,244L467,234L468,234L468,245L469,245L469,241L470,241L470,244L471,244L471,237L472,237L472,242L473,242L473,242L474,242L474,245L475,245L475,233L476,233L476,242L477,242L477,245L478,245L478,239L479,239L479,243L480,243L480,244L481,244L481,236L482,236L482,245L483,245L483,243L484,243L484,243L485,243L485,244L486,244L486,243L487,243L487,236L488,236L488,245L489,245L489,242L490,242L490,244L491,244L491,244L492,244L492,245L493,245L493,234L494,234L494,216L495,216L495,232L496,232L496,245L497,245L497,245L498,245L498,242L499,242L499,242L500,242L500,237L501,237L501,244L502,244L502,243L503,243L503,242L504,242L504,244L505,244L505,243L506,243L506,240L507,240L507,239L508,239L508,244L509,244L509,243L510,243L510,244L511,244L511,222L512,222L512,235L513,235L513,221L514,221L514,242L515,242L515,244L516,244L516,245L517,245L517,241L518,241L518,236L519,236L519,243L520,243L520,240L521,240L521,234L522,234L522,244L523,244L523,243L524,243L524,242L525,242L525,244L526,244L526,242L527,242L527,163L528,163L528,220L529,220L529,244L530,244L530,244L531,244L531,241L532,241L532,242L533,242L533,242L534,242L534,241L535,241L535,242L536,242L536,243L537,243L537,239L538,239L538,243L539,243L539,228L540,228L540,239L541,239L541,239L542,239L542,241L543,241L543,240L544,240L544,221L545,221L545,244L546,244L546,244L547,244L547,240L548,240L548,238L549,238L549,244L550,244L550,243L551,243L551,243L552,243L552,243L553,243L553,213L554,213L554,228L555,228L555,243L556,243L556,243L557,243L557,244L558,244L558,238L559,238L559,244L560,244L560,240L561,240L561,237L562,237L562,241L563,241L563,239L564,239L564,221L565,221L565,245L566,245L566,242L567,242L567,242L568,242L568,228L569,228L569,237L570,237L570,244L571,244L571,243L572,243L572,242L573,242L573,238L574,238L574,243L575,243L575,239L576,239L576,242L577,242L577,245L578,245L578,204L579,204L579,171L580,171L580,204L581,204L581,222L582,222L582,231L583,231L583,235L584,235L584,232L585,232L585,224L586,224L586,228L587,228L587,239L588,239L588,240L589,240L589,233L590,233L590,234L591,234L591,236L592,236L592,228L593,228L593,254.0Z" fill="#1fc000" shape-rendering="crispEdges"/>
<polyline points="190.0,241.5 191.0,241.5 191.0,240.5 192.0,240.5 193.0,240.5 194.0,240.5 195.0,240.5 196.0,240.5 197.0,240.5 198.0,240.5 199.0,240.5 200.0,240.5 201.0,240.5 202.0,240.5 203.0,240.5 204.0,240.5 205.0,240.5 205.0,239.5 206.0,239.5 207.0,239.5 208.0,239.5 209.0,239.5 210.0,239.5 211.0,239.5 212.0,239.5 213.0,239.5 214.0,239.5 215.0,239.5 216.0,239.5 217.0,239.5 218.0,239.5 218.0,238.5 219.0,238.5 220.0,238.5 221.0,238.5 222.0,238.5 223.0,238.5 224.0,238.5 225.0,238.5 226.0,238.5 227.0,238.5 228.0,238.5 229.0,238.5 230.0,238.5 231.0,238.5 231.0,237.5 232.0,237.5 233.0,237.5 234.0,237.5 235.0,237.5 236.0,237.5 237.0,237.5 238.0,237.5 239.0,237.5 240.0,237.5 241.0,237.5 242.0,237.5 243.0,237.5 244.0,237.5 245.0,237.5 246.0,237.5 247.0,237.5 248.0,237.5 249.0,237.5 249.0,236.5 250.0,236.5 251.0,236.5 252.0,236.5 253.0,236.5 254.0,236.5 255.0,236.5 256.0,236.5 257.0,236.5 258.0,236.5 259.0,236.5 260.0,236.5 261.0,236.5 262.0,236.5 263.0,236.5 264.0,236.5 265.0,236.5 266.0,236.5 267.0,236.5 267.0,235.5 268.0,235.5 269.0,235.5 270.0,235.5 271.0,235.5 272.0,235.5 273.0,235.5 274.0,235.5 275.0,235.5 276.0,235.5 277.0,235.5 278.0,235.5 279.0,235.5 280.0,235.5 281.0,235.5 282.0,235.5 283.0,235.5 284.0,235.5 285.0,235.5 286.0,235.5 287.0,235.5 287.0,234.5 288.0,234.5 289.0,234.5 290.0,234.5 291.0,234.5 292.0,234.5 293.0,234.5 294.0,234.5 295.0,234.5 296.0,234.5 297.0,234.5 298.0,234.5 299.0,234.5 300.0,234.5 301.0,234.5 302.0,234.5 303.0,234.5 304.0,234.5 305.0,234.5 306.0,234.5 307.0,234.5 308.0,234.5 308.0,233.5 309.0,233.5 310.0,233.5 311.0,233.5 312.0,233.5 313.0,233.5 314.0,233.5 315.0,233.5 316.0,233.5 317.0,233.5 318.0,233.5 319.0,233.5 320.0,233.5 321.0,233.5 322.0,233.5 323.0,233.5 324.0,233.5 325.0,233.5 326.0,233.5 327.0,233.5 328.0,233.5 329.0,233.5 330.0,233.5 331.0,233.5 331.0,232.5 332.0,232.5 333.0,232.5 334.0,232.5 335.0,232.5 336.0,232.5 337.0,232.5 338.0,232.5 339.0,232.5 340.0,232.5 341.0,232.5 342.0,232.5 343.0,232.5 344.0,232.5 345.0,232.5 346.0,232.5 347.0,232.5 348.0,232.5 349.0,232.5 350.0,232.5 351.0,232.5 352.0,232.5 353.0,232.5 354.0,232.5 355.0,232.5 356.0,232.5 356.0,231.5 357.0,231.5 358.0,231.5 359.0,231.5 360.0,231.5 361.0,231.5 362.0,231.5 363.0,231.5 364.0,231.5 365.0,231.5 366.0,231.5 367.0,231.5 368.0,231.5 369.0,231.5 370.0,231.5 371.0,231.5 372.0,231.5 373.0,231.5 374.0,231.5 375.0,231.5 376.0,231.5 377.0,231.5 378.0,231.5 379.0,231.5 380.0,231.5 381.0,231.5 381.0,230.5 382.0,230.5 383.0,230.5 384.0,230.5 385.0,230.5 386.0,230.5 387.0,230.5 388.0,230.5 389.0,230.5 390.0,230.5 391.0,230.5 392.0,230.5 393.0,230.5 394.0,230.5 395.0,230.5 396.0,230.5 397.0,230.5 398.0,230.5 399.0,230.5 400.0,230.5 401.0,230.5 402.0,230.5 403.0,230.5 404.0,230.5 405.0,230.5 406.0,230.5 406.0,229.5 407.0,229.5 408.0,229.5 409.0,229.5 410.0,229.5 411.0,229.5 412.0,229.5 413.0,229.5 414.0,229.5 415.0,229.5 416.0,229.5 417.0,229.5 418.0,229.5 419.0,229.5 420.0,229.5 421.0,229.5 422.0,229.5 423.0,229.5 424.0,229.5 425.0,229.5 426.0,229.5 427.0,229.5 428.0,229.5 429.0,229.5 430.0,229.5 431.0,229.5 432.0,229.5 433.0,229.5 434.0,229.5 434.0,228.5 435.0,228.5 436.0,228.5 437.0,228.5 438.0,228.5 439.0,228.5 440.0,228.5 441.0,228.5 442.0,228.5 443.0,228.5 444.0,228.5 445.0,228.5 446.0,228.5 447.0,228.5 448.0,228.5 449.0,228.5 450.0,228.5 451.0,228.5 452.0,228.5 453.0,228.5 454.0,228.5 455.0,228.5 456.0,228.5 457.0,228.5 458.0,228.5 459.0,228.5 460.0,228.5 461.0,228.5 461.0,227.5 462.0,227.5 463.0,227.5 464.0,227.5 465.0,227.5 466.0,227.5 467.0,227.5 468.0,227.5 469.0,227.5 470.0,227.5 471.0,227.5 472.0,227.5 473.0,227.5 474.0,227.5 475.0,227.5 476.0,227.5 477.0,227.5 478.0,227.5 479.0,227.5 480.0,227.5 481.0,227.5 482.0,227.5 483.0,227.5 484.0,227.5 485.0,227.5 486.0,227.5 487.0,227.5 488.0,227.5 489.0,227.5 490.0,227.5 491.0,227.5 491.0,226.5 492.0,226.5 493.0,226.5 494.0,226.5 495.0,226.5 496.0,226.5 497.0,226.5 498.0,226.5 499.0,226.5 500.0,226.5 501.0,226.5 502.0,226.5 503.0,226.5 504.0,226.5 505.0,226.5 506.0,226.5 507.0,226.5 508.0,226.5 509.0,226.5 510.0,226.5 511.0,226.5 512.0,226.5 513.0,226.5 514.0,226.5 515.0,226.5 516.0,226.5 517.0,226.5 518.0,226.5 519.0,226.5 520.0,226.5 521.0,226.5 522.0,226.5 523.0,226.5 524.0,226.5 524.0,225.5 525.0,225.5 526.0,225.5 527.0,225.5 528.0,225.5 529.0,225.5 530.0,225.5 531.0,225.5 532.0,225.5 533.0,225.5 534.0,225.5 535.0,225.5 536.0,225.5 537.0,225.5 538.0,225.5 539.0,225.5 540.0,225.5 541.0,225.5 542.0,225.5 543.0,225.5 544.0,225.5 545.0,225.5 546.0,225.5 547.0,225.5 548.0,225.5 549.0,225.5 550.0,225.5 551.0,225.5 552.0,225.5 553.0,225.5 554.0,225.5 555.0,225.5 556.0,225.5 557.0,225.5 558.0,225.5 559.0,225.5 560.0,225.5 561.0,225.5 561.0,224.5 562.0,224.5 563.0,224.5 564.0,224.5 565.0,224.5 566.0,224.5 567.0,224.5 568.0,224.5 569.0,224.5 570.0,224.5 571.0,224.5 572.0,224.5 573.0,224.5 574.0,224.5 575.0,224.5 576.0,224.5 577.0,224.5 578.0,224.5 579.0,224.5 580.0,224.5 581.0,224.5 582.0,224.5 583.0,224.5 584.0,224.5 585.0,224.5 586.0,224.5 587.0,224.5 588.0,224.5 589.0,224.5 590.0,224.5 591.0,224.5 592.0,224.5 593.0,224.5" fill="none" stroke="#93d4ff" stroke-width="1" shape-rendering="crispEdges"/>
<rect x="592" y="128" width="1.2" height="126" fill="#45d4f4"/>
<rect x="189" y="127" width="2" height="127.5" fill="#000"/>
<rect x="189" y="127" width="435" height="2" fill="#000"/>
<rect x="622" y="127" width="2" height="128" fill="#000"/>
<line x1="185" y1="238.5" x2="189" y2="238.5" stroke="#000"/>
<text x="185.5" y="242.1" text-anchor="end">50</text>
<line x1="185" y1="222.5" x2="189" y2="222.5" stroke="#000"/>
<text x="185.5" y="226.3" text-anchor="end">100</text>
<line x1="185" y1="206.5" x2="189" y2="206.5" stroke="#000"/>
<text x="185.5" y="210.6" text-anchor="end">150</text>
<line x1="185" y1="191.5" x2="189" y2="191.5" stroke="#000"/>
<text x="185.5" y="194.8" text-anchor="end">200</text>
<line x1="185" y1="175.5" x2="189" y2="175.5" stroke="#000"/>
<text x="185.5" y="179.1" text-anchor="end">250</text>
<line x1="185" y1="159.5" x2="189" y2="159.5" stroke="#000"/>
<text x="185.5" y="163.3" text-anchor="end">300</text>
<line x1="185" y1="143.5" x2="189" y2="143.5" stroke="#000"/>
<text x="185.5" y="147.6" text-anchor="end">350</text>
<line x1="185" y1="128.5" x2="189" y2="128.5" stroke="#000"/>
<text x="185.5" y="131.8" text-anchor="end">400</text>
<line x1="624" y1="247.5" x2="626" y2="247.5" stroke="#000"/>
<line x1="624" y1="240.5" x2="627.5" y2="240.5" stroke="#000"/>
<text x="627.3" y="243.8" font-size="10.3px">2 X</text>
<line x1="624" y1="233.5" x2="626" y2="233.5" stroke="#000"/>
<line x1="624" y1="226.5" x2="627.5" y2="226.5" stroke="#000"/>
<text x="627.3" y="229.8" font-size="10.3px">4 X</text>
<line x1="624" y1="219.5" x2="626" y2="219.5" stroke="#000"/>
<line x1="624" y1="212.5" x2="627.5" y2="212.5" stroke="#000"/>
<text x="627.3" y="215.8" font-size="10.3px">6 X</text>
<line x1="624" y1="205.5" x2="626" y2="205.5" stroke="#000"/>
<line x1="624" y1="198.5" x2="627.5" y2="198.5" stroke="#000"/>
<text x="627.3" y="201.8" font-size="10.3px">8 X</text>
<line x1="624" y1="191.5" x2="626" y2="191.5" stroke="#000"/>
<line x1="624" y1="184.5" x2="627.5" y2="184.5" stroke="#000"/>
<text x="627.3" y="187.8" font-size="10.3px">10 X</text>
<line x1="624" y1="177.5" x2="626" y2="177.5" stroke="#000"/>
<line x1="624" y1="170.5" x2="627.5" y2="170.5" stroke="#000"/>
<text x="627.3" y="173.8" font-size="10.3px">12 X</text>
<line x1="624" y1="163.5" x2="626" y2="163.5" stroke="#000"/>
<line x1="624" y1="156.5" x2="627.5" y2="156.5" stroke="#000"/>
<text x="627.3" y="159.8" font-size="10.3px">14 X</text>
<line x1="624" y1="149.5" x2="626" y2="149.5" stroke="#000"/>
<line x1="624" y1="142.5" x2="627.5" y2="142.5" stroke="#000"/>
<text x="627.3" y="145.8" font-size="10.3px">16 X</text>
<line x1="624" y1="135.5" x2="626" y2="135.5" stroke="#000"/>
<line x1="624" y1="128.5" x2="627.5" y2="128.5" stroke="#000"/>
<text x="627.3" y="131.8" font-size="10.3px">18 X</text>
<text x="189.3" y="264.3" text-anchor="middle">0.0</text>
<text x="232.7" y="264.3" text-anchor="middle">2.5</text>
<text x="276.1" y="264.3" text-anchor="middle">5.0</text>
<text x="319.5" y="264.3" text-anchor="middle">7.5</text>
<text x="362.9" y="264.3" text-anchor="middle">10.0</text>
<text x="406.3" y="264.3" text-anchor="middle">12.5</text>
<text x="449.7" y="264.3" text-anchor="middle">15.0</text>
<text x="493.1" y="264.3" text-anchor="middle">17.5</text>
<text x="536.5" y="264.3" text-anchor="middle">20.0</text>
<text x="579.9" y="264.3" text-anchor="middle">22.5</text>
<text x="621.1" y="264.3" text-anchor="middle">25.0 GB</text>
<text x="189.3" y="420.0" text-anchor="middle">0.0</text>
<text x="232.7" y="420.0" text-anchor="middle">2.5</text>
<text x="276.1" y="420.0" text-anchor="middle">5.0</text>
<text x="319.5" y="420.0" text-anchor="middle">7.5</text>
<text x="362.9" y="420.0" text-anchor="middle">10.0</text>
<text x="406.3" y="420.0" text-anchor="middle">12.5</text>
<text x="449.7" y="420.0" text-anchor="middle">15.0</text>
<text x="493.1" y="420.0" text-anchor="middle">17.5</text>
<text x="536.5" y="420.0" text-anchor="middle">20.0</text>
<text x="579.9" y="420.0" text-anchor="middle">22.5</text>
<text x="621.1" y="420.0" text-anchor="middle">25.0 GB</text>
<rect x="191" y="117" width="6" height="8" fill="#008000"/><text x="200" y="124.8">LDC</text>
<rect x="223.5" y="117" width="6" height="8" fill="#87cefa"/><text x="232.3" y="124.8">Read speed</text>
<rect x="293" y="117" width="6" height="8" fill="#ff80e0"/><text x="302.4" y="124.8">Write speed</text>
<rect x="189" y="283" width="435" height="127" fill="url(#bg2)"/>
<line x1="190" y1="397.5" x2="623" y2="397.5" stroke="#181818" stroke-width="1"/>
<line x1="190" y1="384.5" x2="623" y2="384.5" stroke="#181818" stroke-width="1"/>
<line x1="190" y1="372.5" x2="623" y2="372.5" stroke="#181818" stroke-width="1"/>
<line x1="190" y1="359.5" x2="623" y2="359.5" stroke="#181818" stroke-width="1"/>
<line x1="190" y1="347.5" x2="623" y2="347.5" stroke="#181818" stroke-width="1"/>
<line x1="190" y1="334.5" x2="623" y2="334.5" stroke="#181818" stroke-width="1"/>
<line x1="190" y1="321.5" x2="623" y2="321.5" stroke="#181818" stroke-width="1"/>
<line x1="190" y1="309.5" x2="623" y2="309.5" stroke="#181818" stroke-width="1"/>
<line x1="190" y1="296.5" x2="623" y2="296.5" stroke="#181818" stroke-width="1"/>
<line x1="198.5" y1="284" x2="198.5" y2="410" stroke="#484848" stroke-width="1"/>
<line x1="207.5" y1="284" x2="207.5" y2="410" stroke="#484848" stroke-width="1"/>
<line x1="215.5" y1="284" x2="215.5" y2="410" stroke="#484848" stroke-width="1"/>
<line x1="224.5" y1="284" x2="224.5" y2="410" stroke="#484848" stroke-width="1"/>
<line x1="233.5" y1="284" x2="233.5" y2="410" stroke="#101010" stroke-width="1"/>
<line x1="241.5" y1="284" x2="241.5" y2="410" stroke="#484848" stroke-width="1"/>
<line x1="250.5" y1="284" x2="250.5" y2="410" stroke="#484848" stroke-width="1"/>
<line x1="259.5" y1="284" x2="259.5" y2="410" stroke="#484848" stroke-width="1"/>
<line x1="267.5" y1="284" x2="267.5" y2="410" stroke="#484848" stroke-width="1"/>
<line x1="276.5" y1="284" x2="276.5" y2="410" stroke="#101010" stroke-width="1"/>
<line x1="285.5" y1="284" x2="285.5" y2="410" stroke="#484848" stroke-width="1"/>
<line x1="293.5" y1="284" x2="293.5" y2="410" stroke="#484848" stroke-width="1"/>
<line x1="302.5" y1="284" x2="302.5" y2="410" stroke="#484848" stroke-width="1"/>
<line x1="310.5" y1="284" x2="310.5" y2="410" stroke="#484848" stroke-width="1"/>
<line x1="319.5" y1="284" x2="319.5" y2="410" stroke="#101010" stroke-width="1"/>
<line x1="328.5" y1="284" x2="328.5" y2="410" stroke="#484848" stroke-width="1"/>
<line x1="336.5" y1="284" x2="336.5" y2="410" stroke="#484848" stroke-width="1"/>
<line x1="345.5" y1="284" x2="345.5" y2="410" stroke="#484848" stroke-width="1"/>
<line x1="354.5" y1="284" x2="354.5" y2="410" stroke="#484848" stroke-width="1"/>
<line x1="362.5" y1="284" x2="362.5" y2="410" stroke="#101010" stroke-width="1"/>
<line x1="371.5" y1="284" x2="371.5" y2="410" stroke="#484848" stroke-width="1"/>
<line x1="380.5" y1="284" x2="380.5" y2="410" stroke="#484848" stroke-width="1"/>
<line x1="388.5" y1="284" x2="388.5" y2="410" stroke="#484848" stroke-width="1"/>
<line x1="397.5" y1="284" x2="397.5" y2="410" stroke="#484848" stroke-width="1"/>
<line x1="406.5" y1="284" x2="406.5" y2="410" stroke="#101010" stroke-width="1"/>
<line x1="414.5" y1="284" x2="414.5" y2="410" stroke="#484848" stroke-width="1"/>
<line x1="423.5" y1="284" x2="423.5" y2="410" stroke="#484848" stroke-width="1"/>
<line x1="431.5" y1="284" x2="431.5" y2="410" stroke="#484848" stroke-width="1"/>
<line x1="440.5" y1="284" x2="440.5" y2="410" stroke="#484848" stroke-width="1"/>
<line x1="449.5" y1="284" x2="449.5" y2="410" stroke="#101010" stroke-width="1"/>
<line x1="457.5" y1="284" x2="457.5" y2="410" stroke="#484848" stroke-width="1"/>
<line x1="466.5" y1="284" x2="466.5" y2="410" stroke="#484848" stroke-width="1"/>
<line x1="475.5" y1="284" x2="475.5" y2="410" stroke="#484848" stroke-width="1"/>
<line x1="483.5" y1="284" x2="483.5" y2="410" stroke="#484848" stroke-width="1"/>
<line x1="492.5" y1="284" x2="492.5" y2="410" stroke="#101010" stroke-width="1"/>
<line x1="501.5" y1="284" x2="501.5" y2="410" stroke="#484848" stroke-width="1"/>
<line x1="509.5" y1="284" x2="509.5" y2="410" stroke="#484848" stroke-width="1"/>
<line x1="518.5" y1="284" x2="518.5" y2="410" stroke="#484848" stroke-width="1"/>
<line x1="526.5" y1="284" x2="526.5" y2="410" stroke="#484848" stroke-width="1"/>
<line x1="535.5" y1="284" x2="535.5" y2="410" stroke="#101010" stroke-width="1"/>
<line x1="544.5" y1="284" x2="544.5" y2="410" stroke="#484848" stroke-width="1"/>
<line x1="552.5" y1="284" x2="552.5" y2="410" stroke="#484848" stroke-width="1"/>
<line x1="561.5" y1="284" x2="561.5" y2="410" stroke="#484848" stroke-width="1"/>
<line x1="570.5" y1="284" x2="570.5" y2="410" stroke="#484848" stroke-width="1"/>
<line x1="578.5" y1="284" x2="578.5" y2="410" stroke="#101010" stroke-width="1"/>
<line x1="587.5" y1="284" x2="587.5" y2="410" stroke="#484848" stroke-width="1"/>
<line x1="596.5" y1="284" x2="596.5" y2="410" stroke="#484848" stroke-width="1"/>
<line x1="604.5" y1="284" x2="604.5" y2="410" stroke="#484848" stroke-width="1"/>
<line x1="613.5" y1="284" x2="613.5" y2="410" stroke="#484848" stroke-width="1"/>
<rect x="189" y="409" width="435" height="1.4" fill="#000"/>
<path d="M191,410.0L191,384.8L192,384.8L192,384.8L193,384.8L193,384.8L194,384.8L194,384.8L195,384.8L195,372.2L196,372.2L196,384.8L197,384.8L197,384.8L198,384.8L198,384.8L199,384.8L199,384.8L200,384.8L200,372.2L201,372.2L201,372.2L202,372.2L202,384.8L203,384.8L203,384.8L204,384.8L204,384.8L205,384.8L205,384.8L206,384.8L206,372.2L207,372.2L207,372.2L208,372.2L208,372.2L209,372.2L209,372.2L210,372.2L210,384.8L211,384.8L211,372.2L212,372.2L212,372.2L213,372.2L213,372.2L214,372.2L214,372.2L215,372.2L215,359.6L216,359.6L216,384.8L217,384.8L217,384.8L218,384.8L218,384.8L219,384.8L219,372.2L220,372.2L220,372.2L221,372.2L221,372.2L222,372.2L222,359.6L223,359.6L223,384.8L224,384.8L224,384.8L225,384.8L225,372.2L226,372.2L226,372.2L227,372.2L227,372.2L228,372.2L228,384.8L229,384.8L229,372.2L230,372.2L230,372.2L231,372.2L231,384.8L232,384.8L232,384.8L233,384.8L233,372.2L234,372.2L234,372.2L235,372.2L235,384.8L236,384.8L236,384.8L237,384.8L237,384.8L238,384.8L238,384.8L239,384.8L239,372.2L240,372.2L240,372.2L241,372.2L241,384.8L242,384.8L242,384.8L243,384.8L243,384.8L244,384.8L244,359.6L245,359.6L245,359.6L246,359.6L246,372.2L247,372.2L247,334.4L248,334.4L248,384.8L249,384.8L249,384.8L250,384.8L250,372.2L251,372.2L251,359.6L252,359.6L252,347.0L253,347.0L253,347.0L254,347.0L254,384.8L255,384.8L255,372.2L256,372.2L256,372.2L257,372.2L257,372.2L258,372.2L258,372.2L259,372.2L259,384.8L260,384.8L260,384.8L261,384.8L261,384.8L262,384.8L262,384.8L263,384.8L263,372.2L264,372.2L264,372.2L265,372.2L265,384.8L266,384.8L266,359.6L267,359.6L267,384.8L268,384.8L268,372.2L269,372.2L269,384.8L270,384.8L270,384.8L271,384.8L271,384.8L272,384.8L272,384.8L273,384.8L273,384.8L274,384.8L274,384.8L275,384.8L275,372.2L276,372.2L276,372.2L277,372.2L277,384.8L278,384.8L278,384.8L279,384.8L279,384.8L280,384.8L280,372.2L281,372.2L281,384.8L282,384.8L282,384.8L283,384.8L283,384.8L284,384.8L284,372.2L285,372.2L285,372.2L286,372.2L286,372.2L287,372.2L287,372.2L288,372.2L288,384.8L289,384.8L289,372.2L290,372.2L290,372.2L291,372.2L291,384.8L292,384.8L292,384.8L293,384.8L293,384.8L294,384.8L294,372.2L295,372.2L295,372.2L296,372.2L296,372.2L297,372.2L297,372.2L298,372.2L298,384.8L299,384.8L299,384.8L300,384.8L300,384.8L301,384.8L301,372.2L302,372.2L302,372.2L303,372.2L303,384.8L304,384.8L304,372.2L305,372.2L305,372.2L306,372.2L306,384.8L307,384.8L307,384.8L308,384.8L308,372.2L309,372.2L309,372.2L310,372.2L310,372.2L311,372.2L311,384.8L312,384.8L312,384.8L313,384.8L313,384.8L314,384.8L314,372.2L315,372.2L315,384.8L316,384.8L316,384.8L317,384.8L317,384.8L318,384.8L318,384.8L319,384.8L319,384.8L320,384.8L320,372.2L321,372.2L321,372.2L322,372.2L322,384.8L323,384.8L323,384.8L324,384.8L324,397.4L325,397.4L325,384.8L326,384.8L326,384.8L327,384.8L327,384.8L328,384.8L328,384.8L329,384.8L329,384.8L330,384.8L330,384.8L331,384.8L331,384.8L332,384.8L332,384.8L333,384.8L333,384.8L334,384.8L334,384.8L335,384.8L335,384.8L336,384.8L336,384.8L337,384.8L337,384.8L338,384.8L338,384.8L339,384.8L339,384.8L340,384.8L340,384.8L341,384.8L341,384.8L342,384.8L342,384.8L343,384.8L343,384.8L344,384.8L344,384.8L345,384.8L345,384.8L346,384.8L346,384.8L347,384.8L347,384.8L348,384.8L348,384.8L349,384.8L349,384.8L350,384.8L350,384.8L351,384.8L351,384.8L352,384.8L352,384.8L353,384.8L353,384.8L354,384.8L354,384.8L355,384.8L355,384.8L356,384.8L356,384.8L357,384.8L357,384.8L358,384.8L358,384.8L359,384.8L359,372.2L360,372.2L360,372.2L361,372.2L361,384.8L362,384.8L362,384.8L363,384.8L363,384.8L364,384.8L364,384.8L365,384.8L365,384.8L366,384.8L366,359.6L367,359.6L367,372.2L368,372.2L368,372.2L369,372.2L369,372.2L370,372.2L370,384.8L371,384.8L371,384.8L372,384.8L372,372.2L373,372.2L373,384.8L374,384.8L374,384.8L375,384.8L375,384.8L376,384.8L376,372.2L377,372.2L377,372.2L378,372.2L378,384.8L379,384.8L379,384.8L380,384.8L380,384.8L381,384.8L381,384.8L382,384.8L382,372.2L383,372.2L383,372.2L384,372.2L384,384.8L385,384.8L385,384.8L386,384.8L386,384.8L387,384.8L387,384.8L388,384.8L388,384.8L389,384.8L389,372.2L390,372.2L390,372.2L391,372.2L391,384.8L392,384.8L392,372.2L393,372.2L393,384.8L394,384.8L394,384.8L395,384.8L395,372.2L396,372.2L396,372.2L397,372.2L397,384.8L398,384.8L398,359.6L399,359.6L399,372.2L400,372.2L400,384.8L401,384.8L401,372.2L402,372.2L402,384.8L403,384.8L403,384.8L404,384.8L404,384.8L405,384.8L405,384.8L406,384.8L406,372.2L407,372.2L407,372.2L408,372.2L408,384.8L409,384.8L409,384.8L410,384.8L410,372.2L411,372.2L411,372.2L412,372.2L412,384.8L413,384.8L413,372.2L414,372.2L414,359.6L415,359.6L415,384.8L416,384.8L416,384.8L417,384.8L417,372.2L418,372.2L418,372.2L419,372.2L419,372.2L420,372.2L420,384.8L421,384.8L421,384.8L422,384.8L422,384.8L423,384.8L423,384.8L424,384.8L424,372.2L425,372.2L425,384.8L426,384.8L426,384.8L427,384.8L427,384.8L428,384.8L428,384.8L429,384.8L429,384.8L430,384.8L430,384.8L431,384.8L431,384.8L432,384.8L432,372.2L433,372.2L433,384.8L434,384.8L434,359.6L435,359.6L435,384.8L436,384.8L436,372.2L437,372.2L437,384.8L438,384.8L438,384.8L439,384.8L439,384.8L440,384.8L440,384.8L441,384.8L441,384.8L442,384.8L442,384.8L443,384.8L443,372.2L444,372.2L444,372.2L445,372.2L445,384.8L446,384.8L446,384.8L447,384.8L447,384.8L448,384.8L448,384.8L449,384.8L449,372.2L450,372.2L450,384.8L451,384.8L451,384.8L452,384.8L452,372.2L453,372.2L453,372.2L454,372.2L454,384.8L455,384.8L455,384.8L456,384.8L456,372.2L457,372.2L457,372.2L458,372.2L458,372.2L459,372.2L459,384.8L460,384.8L460,372.2L461,372.2L461,359.6L462,359.6L462,384.8L463,384.8L463,384.8L464,384.8L464,372.2L465,372.2L465,372.2L466,372.2L466,372.2L467,372.2L467,372.2L468,372.2L468,384.8L469,384.8L469,384.8L470,384.8L470,372.2L471,372.2L471,372.2L472,372.2L472,372.2L473,372.2L473,384.8L474,384.8L474,384.8L475,384.8L475,372.2L476,372.2L476,384.8L477,384.8L477,384.8L478,384.8L478,372.2L479,372.2L479,384.8L480,384.8L480,384.8L481,384.8L481,384.8L482,384.8L482,384.8L483,384.8L483,384.8L484,384.8L484,372.2L485,372.2L485,384.8L486,384.8L486,384.8L487,384.8L487,384.8L488,384.8L488,384.8L489,384.8L489,384.8L490,384.8L490,384.8L491,384.8L491,384.8L492,384.8L492,384.8L493,384.8L493,384.8L494,384.8L494,384.8L495,384.8L495,372.2L496,372.2L496,384.8L497,384.8L497,384.8L498,384.8L498,372.2L499,372.2L499,384.8L500,384.8L500,384.8L501,384.8L501,384.8L502,384.8L502,397.4L503,397.4L503,384.8L504,384.8L504,384.8L505,384.8L505,384.8L506,384.8L506,384.8L507,384.8L507,384.8L508,384.8L508,384.8L509,384.8L509,384.8L510,384.8L510,372.2L511,372.2L511,384.8L512,384.8L512,384.8L513,384.8L513,372.2L514,372.2L514,372.2L515,372.2L515,384.8L516,384.8L516,372.2L517,372.2L517,372.2L518,372.2L518,397.4L519,397.4L519,384.8L520,384.8L520,384.8L521,384.8L521,384.8L522,384.8L522,384.8L523,384.8L523,384.8L524,384.8L524,384.8L525,384.8L525,384.8L526,384.8L526,384.8L527,384.8L527,334.4L528,334.4L528,384.8L529,384.8L529,397.4L530,397.4L530,384.8L531,384.8L531,384.8L532,384.8L532,384.8L533,384.8L533,384.8L534,384.8L534,384.8L535,384.8L535,384.8L536,384.8L536,372.2L537,372.2L537,372.2L538,372.2L538,384.8L539,384.8L539,384.8L540,384.8L540,384.8L541,384.8L541,384.8L542,384.8L542,384.8L543,384.8L543,384.8L544,384.8L544,384.8L545,384.8L545,384.8L546,384.8L546,397.4L547,397.4L547,384.8L548,384.8L548,384.8L549,384.8L549,384.8L550,384.8L550,372.2L551,372.2L551,372.2L552,372.2L552,372.2L553,372.2L553,359.6L554,359.6L554,384.8L555,384.8L555,384.8L556,384.8L556,384.8L557,384.8L557,384.8L558,384.8L558,384.8L559,384.8L559,372.2L560,372.2L560,372.2L561,372.2L561,384.8L562,384.8L562,372.2L563,372.2L563,384.8L564,384.8L564,384.8L565,384.8L565,372.2L566,372.2L566,372.2L567,372.2L567,372.2L568,372.2L568,384.8L569,384.8L569,372.2L570,372.2L570,372.2L571,372.2L571,372.2L572,372.2L572,372.2L573,372.2L573,384.8L574,384.8L574,384.8L575,384.8L575,384.8L576,384.8L576,372.2L577,372.2L577,384.8L578,384.8L578,384.8L579,384.8L579,384.8L580,384.8L580,334.4L581,334.4L581,384.8L582,384.8L582,384.8L583,384.8L583,372.2L584,372.2L584,359.6L585,359.6L585,372.2L586,372.2L586,372.2L587,372.2L587,359.6L588,359.6L588,384.8L589,384.8L589,384.8L590,384.8L590,384.8L591,384.8L591,384.8L592,384.8L592,384.8L593,384.8L593,384.8L594,384.8L593.2,410.0Z" fill="#1fc000" shape-rendering="crispEdges"/>
<rect x="191" y="397.4" width="402.2" height="12.6" fill="#22c403" opacity="0.5"/>
<polyline points="191.5,346.5 192.5,336.5 193.5,344.5 194.5,334.5 195.5,337.5 196.5,340.5 197.5,336.5 198.5,348.5 199.5,334.5 200.5,340.5 201.5,328.5 202.5,328.5 203.5,340.5 204.5,332.5 205.5,345.5 206.5,335.5 207.5,341.5 208.5,337.5 209.5,347.5 210.5,339.5 211.5,347.5 212.5,338.5 213.5,346.5 214.5,337.5 215.5,334.5 216.5,346.5 217.5,332.5 218.5,345.5 219.5,334.5 220.5,346.5 221.5,339.5 222.5,339.5 223.5,336.5 224.5,340.5 225.5,347.5 226.5,340.5 227.5,342.5 228.5,350.5 229.5,346.5 230.5,342.5 231.5,342.5 232.5,348.5 233.5,343.5 234.5,351.5 235.5,349.5 236.5,343.5 237.5,345.5 238.5,337.5 239.5,339.5 240.5,335.5 241.5,349.5 242.5,337.5 243.5,354.5 244.5,348.5 245.5,344.5 246.5,352.5 247.5,344.5 248.5,351.5 249.5,348.5 250.5,344.5 251.5,343.5 252.5,343.5 253.5,339.5 254.5,339.5 255.5,349.5 256.5,332.5 257.5,353.5 258.5,343.5 259.5,344.5 260.5,352.5 261.5,339.5 262.5,347.5 263.5,339.5 264.5,330.5 265.5,346.5 266.5,343.5 267.5,341.5 268.5,347.5 269.5,335.5 270.5,349.5 271.5,343.5 272.5,350.5 273.5,338.5 274.5,349.5 275.5,339.5 276.5,331.5 277.5,353.5 278.5,340.5 279.5,348.5 280.5,332.5 281.5,347.5 282.5,339.5 283.5,345.5 284.5,336.5 285.5,344.5 286.5,334.5 287.5,344.5 288.5,340.5 289.5,340.5 290.5,329.5 291.5,346.5 292.5,336.5 293.5,327.5 294.5,340.5 295.5,345.5 296.5,333.5 297.5,338.5 298.5,331.5 299.5,334.5 300.5,342.5 301.5,333.5 302.5,337.5 303.5,333.5 304.5,339.5 305.5,333.5 306.5,343.5 307.5,340.5 308.5,330.5 309.5,330.5 310.5,326.5 311.5,341.5 312.5,336.5 313.5,337.5 314.5,339.5 315.5,327.5 316.5,331.5 317.5,333.5 318.5,338.5 319.5,322.5 320.5,342.5 321.5,332.5 322.5,330.5 323.5,339.5 324.5,339.5 325.5,338.5 326.5,326.5 327.5,339.5 328.5,329.5 329.5,342.5 330.5,326.5 331.5,334.5 332.5,329.5 333.5,337.5 334.5,325.5 335.5,333.5 336.5,327.5 337.5,334.5 338.5,340.5 339.5,324.5 340.5,335.5 341.5,333.5 342.5,334.5 343.5,326.5 344.5,338.5 345.5,326.5 346.5,342.5 347.5,327.5 348.5,325.5 349.5,314.5 350.5,335.5 351.5,325.5 352.5,336.5 353.5,327.5 354.5,337.5 355.5,323.5 356.5,321.5 357.5,339.5 358.5,323.5 359.5,338.5 360.5,318.5 361.5,333.5 362.5,322.5 363.5,336.5 364.5,329.5 365.5,324.5 366.5,337.5 367.5,322.5 368.5,329.5 369.5,322.5 370.5,333.5 371.5,318.5 372.5,330.5 373.5,326.5 374.5,328.5 375.5,323.5 376.5,331.5 377.5,328.5 378.5,322.5 379.5,331.5 380.5,324.5 381.5,332.5 382.5,321.5 383.5,333.5 384.5,315.5 385.5,327.5 386.5,322.5 387.5,319.5 388.5,327.5 389.5,321.5 390.5,331.5 391.5,318.5 392.5,318.5 393.5,327.5 394.5,323.5 395.5,327.5 396.5,318.5 397.5,327.5 398.5,321.5 399.5,322.5 400.5,338.5 401.5,328.5 402.5,313.5 403.5,315.5 404.5,322.5 405.5,333.5 406.5,321.5 407.5,331.5 408.5,326.5 409.5,333.5 410.5,329.5 411.5,314.5 412.5,326.5 413.5,321.5 414.5,313.5 415.5,319.5 416.5,328.5 417.5,319.5 418.5,324.5 419.5,318.5 420.5,333.5 421.5,315.5 422.5,324.5 423.5,327.5 424.5,325.5 425.5,320.5 426.5,325.5 427.5,317.5 428.5,327.5 429.5,319.5 430.5,324.5 431.5,319.5 432.5,314.5 433.5,323.5 434.5,318.5 435.5,316.5 436.5,322.5 437.5,316.5 438.5,323.5 439.5,321.5 440.5,325.5 441.5,318.5 442.5,313.5 443.5,326.5 444.5,317.5 445.5,322.5 446.5,322.5 447.5,325.5 448.5,314.5 449.5,323.5 450.5,321.5 451.5,329.5 452.5,314.5 453.5,322.5 454.5,316.5 455.5,325.5 456.5,311.5 457.5,317.5 458.5,321.5 459.5,316.5 460.5,323.5 461.5,316.5 462.5,329.5 463.5,313.5 464.5,315.5 465.5,320.5 466.5,323.5 467.5,316.5 468.5,321.5 469.5,315.5 470.5,321.5 471.5,308.5 472.5,321.5 473.5,317.5 474.5,317.5 475.5,318.5 476.5,316.5 477.5,325.5 478.5,327.5 479.5,317.5 480.5,324.5 481.5,329.5 482.5,316.5 483.5,309.5 484.5,325.5 485.5,317.5 486.5,324.5 487.5,316.5 488.5,327.5 489.5,317.5 490.5,326.5 491.5,316.5 492.5,325.5 493.5,320.5 494.5,324.5 495.5,316.5 496.5,318.5 497.5,318.5 498.5,313.5 499.5,331.5 500.5,316.5 501.5,327.5 502.5,318.5 503.5,320.5 504.5,320.5 505.5,335.5 506.5,321.5 507.5,331.5 508.5,329.5 509.5,321.5 510.5,320.5 511.5,330.5 512.5,331.5 513.5,330.5 514.5,321.5 515.5,330.5 516.5,336.5 517.5,322.5 518.5,332.5 519.5,323.5 520.5,329.5 521.5,325.5 522.5,324.5 523.5,330.5 524.5,327.5 525.5,332.5 526.5,325.5 527.5,335.5 528.5,324.5 529.5,333.5 530.5,339.5 531.5,326.5 532.5,338.5 533.5,326.5 534.5,346.5 535.5,330.5 536.5,336.5 537.5,329.5 538.5,340.5 539.5,339.5 540.5,336.5 541.5,333.5 542.5,337.5 543.5,345.5 544.5,335.5 545.5,343.5 546.5,335.5 547.5,339.5 548.5,334.5 549.5,333.5 550.5,342.5 551.5,335.5 552.5,341.5 553.5,337.5 554.5,333.5 555.5,342.5 556.5,337.5 557.5,341.5 558.5,338.5 559.5,340.5 560.5,341.5 561.5,338.5 562.5,336.5 563.5,343.5 564.5,335.5 565.5,333.5 566.5,337.5 567.5,346.5 568.5,336.5 569.5,342.5 570.5,340.5 571.5,333.5 572.5,337.5 573.5,346.5 574.5,345.5 575.5,338.5 576.5,342.5 577.5,337.5 578.5,342.5 579.5,336.5 580.5,340.5 581.5,340.5 582.5,335.5 583.5,344.5 584.5,336.5 585.5,334.5 586.5,341.5 587.5,335.5 588.5,343.5 589.5,334.5 590.5,334.5 591.5,337.5" fill="none" stroke="#dfa2df" stroke-width="1" shape-rendering="crispEdges" stroke-linejoin="bevel"/>
<rect x="592" y="284" width="1.2" height="126" fill="#45d4f4"/>
<rect x="189" y="283" width="2" height="127.5" fill="#000"/>
<rect x="189" y="283" width="435" height="2" fill="#000"/>
<rect x="622" y="283" width="2" height="128" fill="#000"/>
<line x1="185" y1="397.5" x2="189" y2="397.5" stroke="#000"/>
<text x="186.2" y="401.2" text-anchor="end">1</text>
<line x1="185" y1="384.5" x2="189" y2="384.5" stroke="#000"/>
<text x="186.2" y="388.6" text-anchor="end">2</text>
<line x1="185" y1="372.5" x2="189" y2="372.5" stroke="#000"/>
<text x="186.2" y="376.0" text-anchor="end">3</text>
<line x1="185" y1="359.5" x2="189" y2="359.5" stroke="#000"/>
<text x="186.2" y="363.4" text-anchor="end">4</text>
<line x1="185" y1="347.5" x2="189" y2="347.5" stroke="#000"/>
<text x="186.2" y="350.8" text-anchor="end">5</text>
<line x1="185" y1="334.5" x2="189" y2="334.5" stroke="#000"/>
<text x="186.2" y="338.2" text-anchor="end">6</text>
<line x1="185" y1="321.5" x2="189" y2="321.5" stroke="#000"/>
<text x="186.2" y="325.6" text-anchor="end">7</text>
<line x1="185" y1="309.5" x2="189" y2="309.5" stroke="#000"/>
<text x="186.2" y="313.0" text-anchor="end">8</text>
<line x1="185" y1="296.5" x2="189" y2="296.5" stroke="#000"/>
<text x="186.2" y="300.4" text-anchor="end">9</text>
<line x1="185" y1="284.5" x2="189" y2="284.5" stroke="#000"/>
<text x="186.2" y="287.8" text-anchor="end">10</text>
<text x="626.5" y="388.6">4%</text>
<text x="626.5" y="363.4">8%</text>
<text x="626.5" y="338.2">12%</text>
<text x="626.5" y="313.0">16%</text>
<text x="626.5" y="287.8">20%</text>
<rect x="191" y="273" width="6" height="8" fill="#008000"/><text x="200" y="280.8">BIS</text>
<rect x="219" y="273" width="6" height="8" fill="#d8a0d8"/><text x="228" y="280.8">Jitter</text>
<rect x="254" y="270" width="6" height="2.6" fill="#000"/>
</svg>
</body></html>
